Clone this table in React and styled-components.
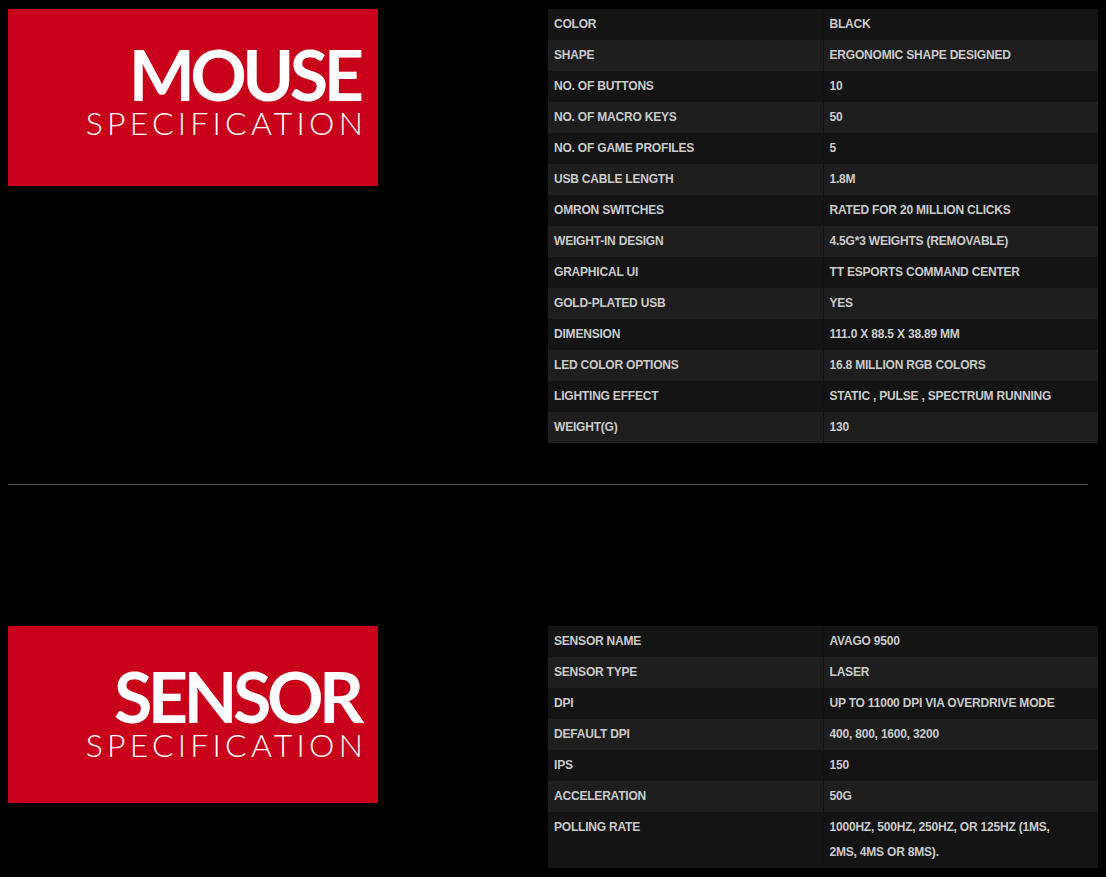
import React from 'react'
import styled, { createGlobalStyle } from 'styled-components'

const GlobalStyle = createGlobalStyle`
  html, body {
    margin: 0;
    background: #000;
  }
  body {
    font-family: "Liberation Sans", Arial, sans-serif;
  }
`;

const Page = styled.div`
  padding: 9px 8px 0 8px;
  width: 1090px;
`;

const Section = styled.section`
  display: flex;
  justify-content: space-between;
  align-items: flex-start;
`;

const Banner = styled.div`
  width: 370px;
  height: 177px;
  box-sizing: border-box;
  background: #c8001a;
  display: flex;
  flex-direction: column;
  align-items: flex-end;
  padding: ${p => p.$top}px 15px 0 0;
  color: #fff;
  font-family: Lato, "Open Sans", sans-serif;
`;

const BigWord = styled.div`
  font-size: 70px;
  font-weight: 700;
  line-height: 56px;
  letter-spacing: -4.5px;
  margin-right: 3.5px;
`;

const SmallWord = styled.div`
  font-size: 32px;
  font-weight: 300;
  line-height: 26px;
  letter-spacing: 4.2px;
  margin-right: -4px;
  margin-top: 8px;
`;

const SpecTable = styled.table`
  width: 550px;
  table-layout: fixed;
  border-collapse: collapse;
`;

const Row = styled.tr`
  background: ${p => (p.$odd ? '#1e1e1e' : '#141414')};
`;

const Cell = styled.td`
  width: 50%;
  padding: 3px 24px 3px 6px;
  line-height: 25px;
  font-size: 12px;
  font-weight: 700;
  letter-spacing: -0.2px;
  color: #cbcbcb;
  vertical-align: top;
  & + & {
    border-left: 1px solid #111;
  }
`;

const Divider = styled.hr`
  border: 0;
  height: 1px;
  background: #4f4f4f;
  margin: 41px 10px 141px 0;
`;

const mouseSpecs = [
  ['COLOR', 'BLACK'],
  ['SHAPE', 'ERGONOMIC SHAPE DESIGNED'],
  ['NO. OF BUTTONS', '10'],
  ['NO. OF MACRO KEYS', '50'],
  ['NO. OF GAME PROFILES', '5'],
  ['USB CABLE LENGTH', '1.8M'],
  ['OMRON SWITCHES', 'RATED FOR 20 MILLION CLICKS'],
  ['WEIGHT-IN DESIGN', '4.5G*3 WEIGHTS (REMOVABLE)'],
  ['GRAPHICAL UI', 'TT ESPORTS COMMAND CENTER'],
  ['GOLD-PLATED USB', 'YES'],
  ['DIMENSION', '111.0 X 88.5 X 38.89 MM'],
  ['LED COLOR OPTIONS', '16.8 MILLION RGB COLORS'],
  ['LIGHTING EFFECT', 'STATIC , PULSE , SPECTRUM RUNNING'],
  ['WEIGHT(G)', '130'],
];

const sensorSpecs = [
  ['SENSOR NAME', 'AVAGO 9500'],
  ['SENSOR TYPE', 'LASER'],
  ['DPI', 'UP TO 11000 DPI VIA OVERDRIVE MODE'],
  ['DEFAULT DPI', '400, 800, 1600, 3200'],
  ['IPS', '150'],
  ['ACCELERATION', '50G'],
  ['POLLING RATE', '1000HZ, 500HZ, 250HZ, OR 125HZ (1MS, 2MS, 4MS OR 8MS).'],
];

function Specs({ rows }) {
  return (
    <SpecTable>
      <tbody>
        {rows.map(([name, value], i) => (
          <Row key={name} $odd={i % 2 === 1}>
            <Cell>{name}</Cell>
            <Cell>{value}</Cell>
          </Row>
        ))}
      </tbody>
    </SpecTable>
  );
}

export default function App() {
  return (
    <Page>
      <GlobalStyle />
      <Section>
        <Banner $top={37}>
          <BigWord>MOUSE</BigWord>
          <SmallWord>SPECIFICATION</SmallWord>
        </Banner>
        <Specs rows={mouseSpecs} />
      </Section>
      <Divider />
      <Section>
        <Banner $top={42}>
          <BigWord>SENSOR</BigWord>
          <SmallWord>SPECIFICATION</SmallWord>
        </Banner>
        <Specs rows={sensorSpecs} />
      </Section>
    </Page>
  );
}
